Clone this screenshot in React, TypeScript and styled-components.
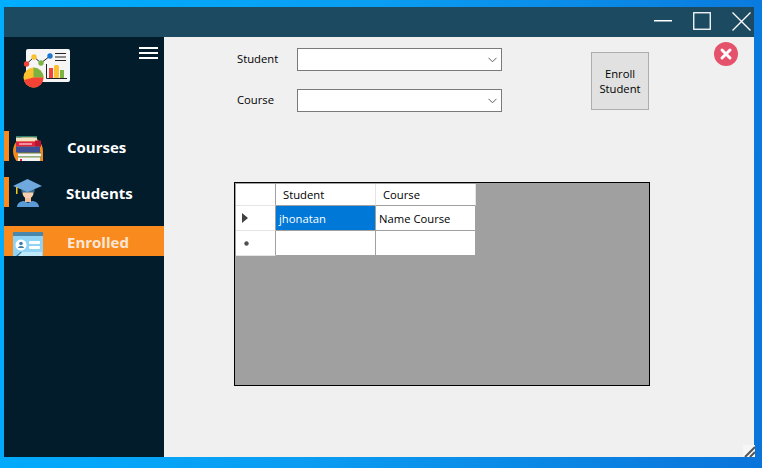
import React from "react";
import styled, { createGlobalStyle } from "styled-components";

const Global = createGlobalStyle`
  html, body { margin: 0; padding: 0; width: 762px; height: 468px; overflow: hidden; }
  body { font-family: "Open Sans", "Noto Sans", sans-serif; }
`;

const Desktop = styled.div`
  width: 762px; height: 468px; box-sizing: border-box;
  padding: 7px 8px 11px 4px;
  background: linear-gradient(100deg, #00aeff 0%, #0a9df2 45%, #0a74da 100%);
`;
const Win = styled.div`
  width: 750px; height: 450px; display: flex; flex-direction: column; background: #f0f0f0; position: relative;
`;
const TitleBar = styled.div`
  height: 30px; box-sizing: border-box; flex: none; background: #1b4a61; display: flex; justify-content: flex-end; align-items: center; gap: 21px; padding: 0 3px 2px 0;
`;
const WinButton = styled.button<{ $wide?: boolean }>`
  width: ${p => (p.$wide ? 19 : 18)}px; height: 19px; padding: 0; border: 0; background: none; display: flex; align-items: center; justify-content: center;
`;
const Body = styled.div` flex: 1; display: flex; min-height: 0; `;
const Sidebar = styled.aside`
  width: 160px; flex: none; background: #021c2b; position: relative; display: flex; flex-direction: column; padding-top: 12px; box-sizing: border-box;
`;
const Logo = styled.div` height: 82px; padding-left: 19px; flex: none; `;
const Hamburger = styled.div`
  position: absolute; left: 135px; top: 10px; width: 19px; display: flex; flex-direction: column; gap: 3px;
  span { display: block; height: 2px; background: #fff; }
`;
const NavItem = styled.div<{ $active?: boolean; $gap?: number }>`
  height: 30px; display: flex; align-items: center; margin-bottom: ${p => p.$gap ?? 0}px;
  background: ${p => (p.$active ? "#f98b1e" : "transparent")};
`;
const Accent = styled.div<{ $on?: boolean }>` width: 5px; height: 30px; flex: none; background: ${p => (p.$on ? "#f98b1e" : "transparent")}; `;
const IconSlot = styled.div` width: 30px; height: 30px; margin-left: 4px; flex: none; `;
const NavText = styled.span<{ $left: number; $dim?: boolean }>`
  margin-left: ${p => p.$left}px; padding-top: 2px; color: ${p => (p.$dim ? "#fbe6d6" : "#fff")}; font-size: 15px; font-weight: 700;
`;
const Main = styled.main`
  flex: 1; position: relative; padding: 11px 105px 0 70px; box-sizing: border-box; color: #000; font-size: 11.25px;
`;
const TopRow = styled.div` display: flex; height: 134px; `;
const Form = styled.div` display: grid; grid-template-columns: 60px 205px; grid-auto-rows: 23px; row-gap: 18px; align-content: start; margin-left: 3px; `;
const Label = styled.label` font-size: 11.25px; line-height: 21px; `;
const Select = styled.div`
  box-sizing: border-box; border: 1px solid #7a7a7a; background: #fff; display: flex; justify-content: flex-end; align-items: center; padding-right: 4px;
`;
const EnrollButton = styled.button`
  box-sizing: border-box; width: 58px; height: 58px; margin: 4px 0 0 89px; padding: 0; background: #e1e1e1; border: 1px solid #adadad;
  font: 11.25px/15px "Open Sans", "Noto Sans", sans-serif; color: #000;
`;
const CloseIcon = styled.div` position: absolute; left: 550px; top: 5px; width: 24px; height: 24px; `;
const Table = styled.div`
  width: 416px; height: 204px; box-sizing: border-box; border: 1px solid #000; background: #a0a0a0; padding: 1px 0 0 1px;
  display: grid; grid-template-columns: 40px 100px 100px; grid-template-rows: 22px 25px 25px; justify-content: start; align-content: start;
`;
const Cell = styled.div<{ $sel?: boolean; $head?: boolean; $pad?: number }>`
  box-sizing: border-box; display: flex; align-items: center; padding-left: ${p => p.$pad ?? 3}px;
  font-size: 11.25px; background: ${p => (p.$sel ? "#0078d7" : "#fff")}; color: ${p => (p.$sel ? "#fff" : "#000")};
  border-right: 1px solid ${p => (p.$head ? "#e4e4e4" : "#a0a0a0")}; border-bottom: 1px solid #a0a0a0;
`;
const RowHead = styled.div<{ $pad?: number }>`
  box-sizing: border-box; background: #fff; display: flex; align-items: center; padding-left: ${p => p.$pad ?? 6}px;
  border-right: 1px solid #a0a0a0; border-bottom: 1px solid #e4e4e4;
`;
const Grip = styled.svg` position: absolute; right: 0; bottom: 0; background: #f6f6f6; `;

const Chevron = () => (
  <svg width="9" height="6" viewBox="0 0 9 6"><path d="M.5.800l4 4 4-4" fill="none" stroke="#606060" strokeWidth="1" /></svg>
);

const LogoIcon = () => (
  <svg width="48" height="40" viewBox="0 0 48 40">
    <rect x="3" y="0" width="44" height="33" rx="2" fill="#f5f5f5" />
    <path d="M3.500 15L11 8L18 14L27 7" fill="none" stroke="#222" strokeWidth="1" />
    <circle cx="3.500" cy="15" r="2.700" fill="#f44336" />
    <circle cx="11" cy="8" r="2.700" fill="#fbc02d" />
    <circle cx="18" cy="14" r="2.700" fill="#7cb342" />
    <circle cx="27" cy="7" r="2.700" fill="#1976d2" />
    <path d="M32 4.500h11M32 8h11M32 11.500h11" stroke="#222" strokeWidth="1" />
    <path d="M23.500 15v14.500H44" fill="none" stroke="#222" strokeWidth="1" />
    <rect x="26" y="19" width="4" height="10" fill="#f44336" />
    <rect x="31" y="16" width="5" height="13" rx="1.500" fill="#fbc02d" />
    <rect x="37" y="21" width="4" height="8" fill="#7cb342" />
    <circle cx="10.500" cy="28.500" r="10" fill="#fbc02d" />
    <path d="M10.500 18.500a10 10 0 0 1 10 10h-10z" fill="#7cb342" />
    <path d="M20.500 28.500a10 10 0 0 1-19.700 2.500l9.700-2.500z" fill="#f44336" />
  </svg>
);

const BooksIcon = () => (
  <svg width="30" height="30" viewBox="0 0 30 30">
    <path d="M0 20a15 15 0 0 1 30 0v10H3.500C1.500 27 0 24 0 20z" fill="#f18a1c" />
    <path d="M30 30V20" stroke="#f18a1c" />
    <rect x="3" y="5" width="21" height="1.500" fill="#2f7f70" />
    <rect x="3" y="6.500" width="21" height="4" fill="#efe3c2" />
    <rect x="3" y="10.500" width="25" height="5" fill="#e2233f" />
    <rect x="6" y="12.500" width="13" height="1" fill="#fff" />
    <rect x="22" y="9.500" width="6" height="6" fill="#b91535" />
    <rect x="3" y="15.500" width="24" height="6" fill="#3c4f97" />
    <rect x="5" y="21.500" width="23" height="1" fill="#1d6b5c" />
    <rect x="5" y="22.500" width="23" height="3" fill="#f4f4f4" />
    <rect x="5" y="25.500" width="23" height="1" fill="#2f9d80" />
    <rect x="5" y="26.500" width="22" height="3.500" fill="#f4f4f4" />
    <rect x="7" y="28" width="2" height="2" fill="#e2233f" />
  </svg>
);

const GradIcon = () => (
  <svg width="30" height="30" viewBox="0 0 30 30">
    <path d="M4 30c0-4 4-6 7-6l4 2 4-2c3 0 7 2 7 6z" fill="#5b9bd5" />
    <rect x="12" y="19" width="6" height="6" fill="#f0bb98" />
    <circle cx="15" cy="16" r="5.500" fill="#f8cfae" />
    <path d="M8.500 11h13v4.500h-13z" fill="#3f6e92" />
    <path d="M0 9L14.500 2 29 9 14.500 15z" fill="#6fa8dc" />
    <rect x="3" y="10" width="1.500" height="7" fill="#f5c518" />
  </svg>
);

const EnrollIcon = () => (
  <svg width="30" height="30" viewBox="0 0 30 30">
    <rect y="6" width="30" height="24" fill="#8fd4f7" />
    <rect y="6" width="30" height="4" fill="#4a87ad" />
    <circle cx="8" cy="19" r="5.500" fill="#fff" />
    <circle cx="8" cy="17.500" r="1.800" fill="#3f7ea6" />
    <path d="M5 22c0-2.800 6-2.800 6 0z" fill="#3f7ea6" />
    <rect x="16" y="15" width="11" height="3" rx="1" fill="#fff" />
    <rect x="16" y="20" width="11" height="3" rx="1" fill="#fff" />
    <rect x="5" y="26" width="24" height="4" fill="#bfe8fb" />
    <path d="M3 30l4-4h2l-4 4z" fill="#3f7ea6" />
  </svg>
);

export default function App() {
  return (
    <Desktop>
      <Global />
      <Win>
        <TitleBar>
          <WinButton aria-label="Minimize">
            <svg width="18" height="2" viewBox="0 0 18 2"><rect width="18" height="1.500" fill="#fff" /></svg>
          </WinButton>
          <WinButton aria-label="Maximize">
            <svg width="18" height="18" viewBox="0 0 18 18"><rect x=".75" y=".75" width="16.500" height="16.500" fill="none" stroke="#fff" strokeWidth="1.300" /></svg>
          </WinButton>
          <WinButton $wide aria-label="Close">
            <svg width="19" height="19" viewBox="0 0 19 19"><path d="M.5.500l18 18M18.500.500l-18 18" stroke="#fff" strokeWidth="1.300" /></svg>
          </WinButton>
        </TitleBar>
        <Body>
          <Sidebar>
            <Logo><LogoIcon /></Logo>
            <Hamburger><span /><span /><span /></Hamburger>
            <NavItem $gap={16}><Accent $on /><IconSlot><BooksIcon /></IconSlot><NavText $left={24}>Courses</NavText></NavItem>
            <NavItem $gap={19}><Accent $on /><IconSlot><GradIcon /></IconSlot><NavText $left={23}>Students</NavText></NavItem>
            <NavItem $active><Accent /><IconSlot><EnrollIcon /></IconSlot><NavText $dim $left={24}>Enrolled</NavText></NavItem>
          </Sidebar>
          <Main>
            <TopRow>
              <Form>
                <Label>Student</Label><Select><Chevron /></Select>
                <Label>Course</Label><Select><Chevron /></Select>
              </Form>
              <EnrollButton>Enroll<br />Student</EnrollButton>
            </TopRow>
            <CloseIcon>
              <svg width="24" height="24" viewBox="0 0 24 24">
                <circle cx="12" cy="12" r="12" fill="#e5526b" />
                <path d="M8 8l8 8M16 8l-8 8" stroke="#fff" strokeWidth="3" strokeLinecap="round" />
              </svg>
            </CloseIcon>
            <Table>
              <RowHead />
              <Cell $head $pad={7}>Student</Cell>
              <Cell $head $pad={7}>Course</Cell>
              <RowHead><svg width="6" height="10" viewBox="0 0 6 10"><path d="M0 0l6 5-6 5z" fill="#404040" /></svg></RowHead>
              <Cell $sel>jhonatan</Cell>
              <Cell>Name Course</Cell>
              <RowHead $pad={8}><svg width="5" height="6" viewBox="0 0 5 6"><circle cx="2.500" cy="3.500" r="2.200" fill="#505050" /></svg></RowHead>
              <Cell />
              <Cell />
            </Table>
            <Grip width="12" height="12" viewBox="0 0 12 12">
              <path d="M2 12L12 2M7 12l5-5" stroke="#555" strokeWidth="2" />
            </Grip>
          </Main>
        </Body>
      </Win>
    </Desktop>
  );
}
